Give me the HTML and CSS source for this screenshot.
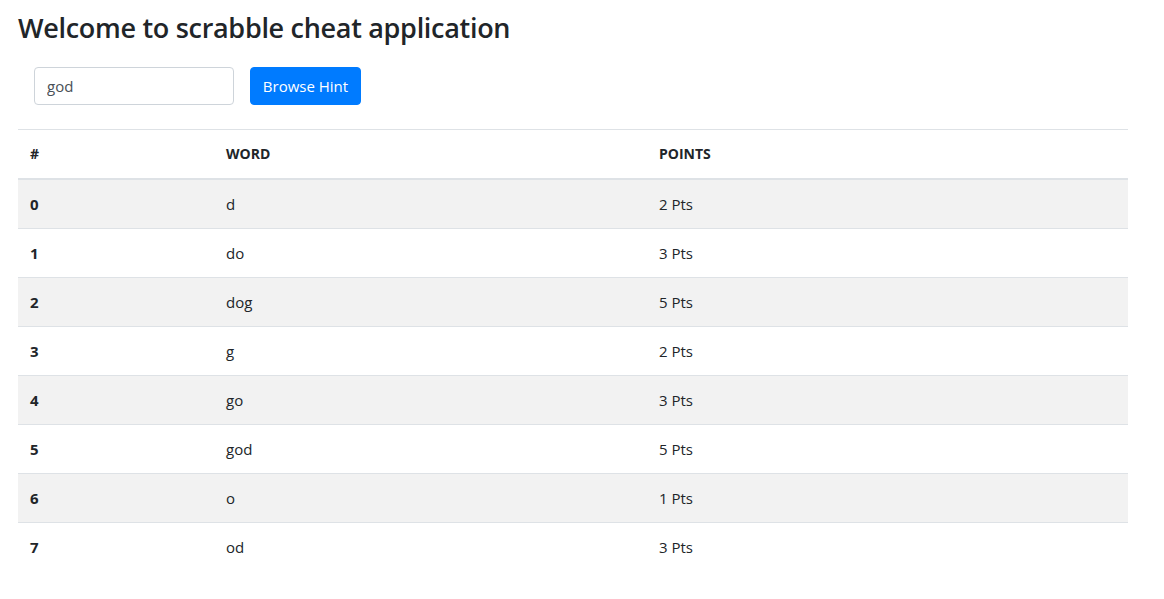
FILE: index.html
```html
<!DOCTYPE html>
<html>
<head>
<meta charset="utf-8">
<link rel="stylesheet" href="styles.css">
</head>
<body>
<div class="container">
  <h3 class="title">Welcome to scrabble cheat application</h3>
  <form class="search">
    <input class="field" type="text" value="god">
    <button class="btn" type="button">Browse Hint</button>
  </form>
  <table class="words">
    <colgroup><col class="c1"><col class="c2"><col class="c3"></colgroup>
    <thead>
      <tr><th>#</th><th>WORD</th><th>POINTS</th></tr>
    </thead>
    <tbody>
      <tr><th>0</th><td>d</td><td>2 Pts</td></tr>
      <tr><th>1</th><td>do</td><td>3 Pts</td></tr>
      <tr><th>2</th><td>dog</td><td>5 Pts</td></tr>
      <tr><th>3</th><td>g</td><td>2 Pts</td></tr>
      <tr><th>4</th><td>go</td><td>3 Pts</td></tr>
      <tr><th>5</th><td>god</td><td>5 Pts</td></tr>
      <tr><th>6</th><td>o</td><td>1 Pts</td></tr>
      <tr><th>7</th><td>od</td><td>3 Pts</td></tr>
    </tbody>
  </table>
</div>
</body>
</html>
```

FILE: styles.css
```css
html, body {
  margin: 0;
  padding: 0;
  background: #fff;
}
body {
  font-family: "Open Sans", "Noto Sans", sans-serif;
  color: #212529;
  font-size: 15px;
}
.container {
  width: 1110px;
  padding-left: 18px;
}
.title {
  margin: 11px 0 22px 0;
  font-size: 27px;
  line-height: 34px;
  font-weight: 600;
  letter-spacing: -0.3px;
}
.search {
  display: flex;
  gap: 16px;
  padding-left: 16px;
  margin: 0 0 24px 0;
}
.field {
  box-sizing: border-box;
  width: 200px;
  height: 38px;
  border: 1px solid #ced4da;
  border-radius: 4px;
  padding: 0 12px;
  font-family: inherit;
  font-size: 15px;
  color: #495057;
  margin: 0;
}
.btn {
  box-sizing: border-box;
  height: 38px;
  width: 111px;
  border: 1px solid #007bff;
  background: #007bff;
  color: #fff;
  border-radius: 4px;
  font-family: inherit;
  font-size: 15px;
  padding: 0;
  margin: 0;
}
.words {
  width: 1110px;
  border-collapse: collapse;
}
.c1 { width: 196px; }
.c2 { width: 433px; }
.c3 { width: 481px; }
.words th, .words td {
  text-align: left;
  padding: 12px;
  line-height: 24px;
  font-size: 15px;
  border-top: 1px solid #dee2e6;
  vertical-align: top;
}
.words th { font-weight: 700; }
.words td { font-weight: 400; }
.words thead th {
  border-bottom: 2px solid #dee2e6;
  font-size: 14px;
}
.words tbody tr:nth-child(odd) {
  background: #f2f2f2;
}
```
